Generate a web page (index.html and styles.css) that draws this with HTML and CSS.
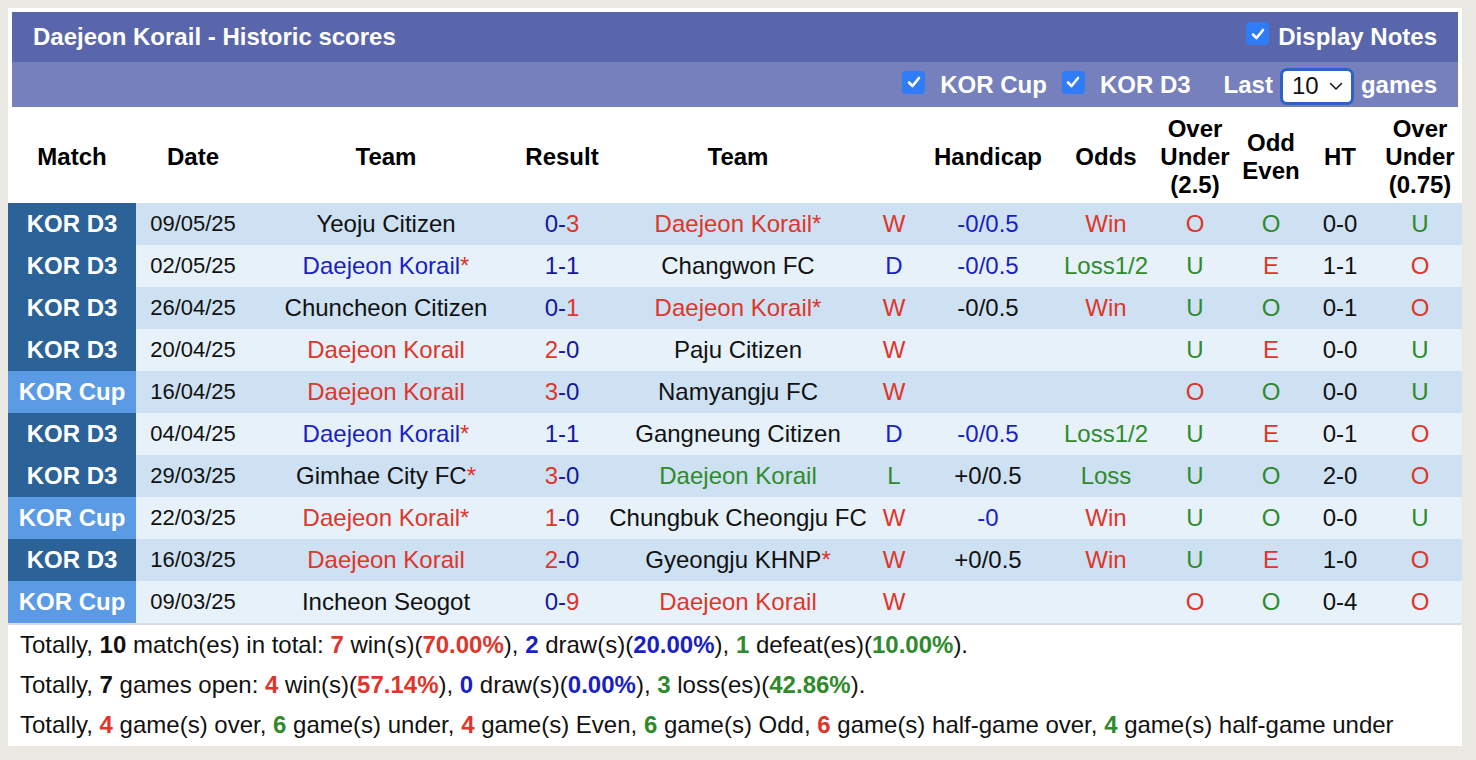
FILE: index.html
```html
<!DOCTYPE html>
<html>
<head>
<meta charset="utf-8">
<title>Daejeon Korail - Historic scores</title>
<link rel="stylesheet" href="styles.css">
</head>
<body>
<div class="panel">
  <div class="bar-title">
    <span class="title">Daejeon Korail - Historic scores</span>
    <label class="opt"><span class="cb"><svg viewBox="0 0 22 22" width="22" height="22"><path d="M6 11.5 L9.5 15 L16 7" fill="none" stroke="#fff" stroke-width="2.6" stroke-linecap="round" stroke-linejoin="round"/></svg></span><span>Display Notes</span></label>
  </div>
  <div class="bar-filter">
    <label class="opt"><span class="cb"><svg viewBox="0 0 22 22" width="22" height="22"><path d="M6 11.5 L9.5 15 L16 7" fill="none" stroke="#fff" stroke-width="2.6" stroke-linecap="round" stroke-linejoin="round"/></svg></span><span>KOR Cup</span></label>
    <label class="opt"><span class="cb"><svg viewBox="0 0 22 22" width="22" height="22"><path d="M6 11.5 L9.5 15 L16 7" fill="none" stroke="#fff" stroke-width="2.6" stroke-linecap="round" stroke-linejoin="round"/></svg></span><span>KOR D3</span></label>
    <span class="last">Last</span>
    <span class="select">10<svg viewBox="0 0 14 9" width="14" height="9"><path d="M1.5 1.5 L7 7 L12.5 1.5" fill="none" stroke="#111" stroke-width="1.5" stroke-linecap="round" stroke-linejoin="round"/></svg></span>
    <span class="games">games</span>
  </div>
  <table class="scores">
    <colgroup>
      <col class="c-match"><col class="c-date"><col class="c-team"><col class="c-res"><col class="c-team"><col class="c-wl"><col class="c-hc"><col class="c-odds"><col class="c-ou"><col class="c-oe"><col class="c-ht"><col class="c-ou2">
    </colgroup>
    <thead>
      <tr>
        <th>Match</th><th>Date</th><th>Team</th><th>Result</th><th>Team</th><th></th><th>Handicap</th><th>Odds</th><th>Over<br>Under<br>(2.5)</th><th>Odd<br>Even</th><th>HT</th><th>Over<br>Under<br>(0.75)</th>
      </tr>
    </thead>
    <tbody>
      <tr class="r1">
        <td class="lg d3">KOR D3</td><td class="dt">09/05/25</td><td>Yeoju Citizen</td><td class="sc">0-<span class="red">3</span></td><td class="red">Daejeon Korail<span class="star">*</span></td><td class="red">W</td><td class="blue">-0/0.5</td><td class="red">Win</td><td class="red">O</td><td class="green">O</td><td>0-0</td><td class="green">U</td>
      </tr>
      <tr class="r2">
        <td class="lg d3">KOR D3</td><td class="dt">02/05/25</td><td class="blue">Daejeon Korail<span class="star">*</span></td><td class="sc">1-1</td><td>Changwon FC</td><td class="blue">D</td><td class="blue">-0/0.5</td><td class="green">Loss1/2</td><td class="green">U</td><td class="red">E</td><td>1-1</td><td class="red">O</td>
      </tr>
      <tr class="r1">
        <td class="lg d3">KOR D3</td><td class="dt">26/04/25</td><td>Chuncheon Citizen</td><td class="sc">0-<span class="red">1</span></td><td class="red">Daejeon Korail<span class="star">*</span></td><td class="red">W</td><td>-0/0.5</td><td class="red">Win</td><td class="green">U</td><td class="green">O</td><td>0-1</td><td class="red">O</td>
      </tr>
      <tr class="r2">
        <td class="lg d3">KOR D3</td><td class="dt">20/04/25</td><td class="red">Daejeon Korail</td><td class="sc"><span class="red">2</span>-0</td><td>Paju Citizen</td><td class="red">W</td><td></td><td></td><td class="green">U</td><td class="red">E</td><td>0-0</td><td class="green">U</td>
      </tr>
      <tr class="r1">
        <td class="lg cup">KOR Cup</td><td class="dt">16/04/25</td><td class="red">Daejeon Korail</td><td class="sc"><span class="red">3</span>-0</td><td>Namyangju FC</td><td class="red">W</td><td></td><td></td><td class="red">O</td><td class="green">O</td><td>0-0</td><td class="green">U</td>
      </tr>
      <tr class="r2">
        <td class="lg d3">KOR D3</td><td class="dt">04/04/25</td><td class="blue">Daejeon Korail<span class="star">*</span></td><td class="sc">1-1</td><td>Gangneung Citizen</td><td class="blue">D</td><td class="blue">-0/0.5</td><td class="green">Loss1/2</td><td class="green">U</td><td class="red">E</td><td>0-1</td><td class="red">O</td>
      </tr>
      <tr class="r1">
        <td class="lg d3">KOR D3</td><td class="dt">29/03/25</td><td>Gimhae City FC<span class="star">*</span></td><td class="sc"><span class="red">3</span>-0</td><td class="green">Daejeon Korail</td><td class="green">L</td><td>+0/0.5</td><td class="green">Loss</td><td class="green">U</td><td class="green">O</td><td>2-0</td><td class="red">O</td>
      </tr>
      <tr class="r2">
        <td class="lg cup">KOR Cup</td><td class="dt">22/03/25</td><td class="red">Daejeon Korail<span class="star">*</span></td><td class="sc"><span class="red">1</span>-0</td><td>Chungbuk Cheongju FC</td><td class="red">W</td><td class="blue">-0</td><td class="red">Win</td><td class="green">U</td><td class="green">O</td><td>0-0</td><td class="green">U</td>
      </tr>
      <tr class="r1">
        <td class="lg d3">KOR D3</td><td class="dt">16/03/25</td><td class="red">Daejeon Korail</td><td class="sc"><span class="red">2</span>-0</td><td>Gyeongju KHNP<span class="star">*</span></td><td class="red">W</td><td>+0/0.5</td><td class="red">Win</td><td class="green">U</td><td class="red">E</td><td>1-0</td><td class="red">O</td>
      </tr>
      <tr class="r2">
        <td class="lg cup">KOR Cup</td><td class="dt">09/03/25</td><td>Incheon Seogot</td><td class="sc">0-<span class="red">9</span></td><td class="red">Daejeon Korail</td><td class="red">W</td><td></td><td></td><td class="red">O</td><td class="green">O</td><td>0-4</td><td class="red">O</td>
      </tr>
    </tbody>
  </table>
  <div class="summary">
    <p>Totally, <b>10</b> match(es) in total: <b class="red">7</b> win(s)(<b class="red">70.00%</b>), <b class="blue">2</b> draw(s)(<b class="blue">20.00%</b>), <b class="green">1</b> defeat(es)(<b class="green">10.00%</b>).</p>
    <p>Totally, <b>7</b> games open: <b class="red">4</b> win(s)(<b class="red">57.14%</b>), <b class="blue">0</b> draw(s)(<b class="blue">0.00%</b>), <b class="green">3</b> loss(es)(<b class="green">42.86%</b>).</p>
    <p>Totally, <b class="red">4</b> game(s) over, <b class="green">6</b> game(s) under, <b class="red">4</b> game(s) Even, <b class="green">6</b> game(s) Odd, <b class="red">6</b> game(s) half-game over, <b class="green">4</b> game(s) half-game under</p>
  </div>
</div>
</body>
</html>
```

FILE: styles.css
```css
html, body {
  margin: 0;
  padding: 0;
}
body {
  background: #e9e8e3;
  padding: 8px;
  font-family: "Liberation Sans", Arial, Helvetica, sans-serif;
  font-size: 24px;
  color: #111;
}
.panel {
  width: 1454px;
  background: #fff;
  padding-top: 4px;
}
.bar-title {
  margin: 0 4px;
  height: 50px;
  background: #5966ab;
  color: #fff;
  font-weight: bold;
  display: flex;
  align-items: center;
  justify-content: space-between;
  padding: 0 21px 0 21px;
}
.bar-filter {
  margin: 0 4px;
  height: 45px;
  background: #7580bd;
  color: #fff;
  font-weight: bold;
  display: flex;
  align-items: center;
  justify-content: flex-end;
  padding: 0 21px;
}
.opt {
  display: flex;
  align-items: center;
  gap: 15px;
}
.bar-title .opt {
  gap: 9px;
}
.bar-title .opt .cb {
  margin-top: -7px;
}
.bar-filter .opt + .opt {
  margin-left: 15px;
}
.cb {
  width: 23px;
  height: 23px;
  border-radius: 4px;
  background: #2f7df6;
  display: flex;
  align-items: center;
  justify-content: center;
  margin-top: -5px;
}
.last {
  margin-left: 33px;
}
.select {
  margin: 3px 7px 0;
  width: 74px;
  height: 37px;
  box-sizing: border-box;
  border: 3px solid #2d63c9;
  border-radius: 7px;
  background: #fff;
  color: #111;
  font-weight: normal;
  display: flex;
  align-items: center;
  justify-content: space-between;
  padding: 0 8px 0 9px;
}
.scores {
  width: 1454px;
  border-collapse: collapse;
  table-layout: fixed;
  border-bottom: 2px solid #d6dde4;
}
.c-match { width: 128px; }
.c-date { width: 114px; }
.c-team { width: 272px; }
.c-res { width: 80px; }
.c-wl { width: 40px; }
.c-hc { width: 148px; }
.c-odds { width: 88px; }
.c-ou { width: 90px; }
.c-oe { width: 62px; }
.c-ht { width: 76px; }
.c-ou2 { width: 84px; }
.scores th {
  height: 96px;
  box-sizing: border-box;
  padding: 4px 0 0;
  font-weight: bold;
  text-align: center;
  vertical-align: middle;
  line-height: 28px;
  color: #000;
}
.scores td {
  height: 42px;
  padding: 0;
  text-align: center;
  vertical-align: middle;
  white-space: nowrap;
  color: #111;
}
.scores td.dt {
  font-size: 22px;
}
.scores tr.r1 td { background: #cde1f2; }
.scores tr.r2 td { background: #e6f1fa; }
.scores tr td.lg {
  color: #fff;
  font-weight: bold;
}
.scores tr td.d3 { background: #2b6398; }
.scores tr td.cup { background: #5b9ae4; }
.scores td.sc { color: #15189a; }
.red, .scores td.red, .scores td .red { color: #e0352b; }
.blue, .scores td.blue { color: #1a1fc4; }
.green, .scores td.green { color: #2f8a2b; }
.star { color: #e0352b; }
.summary {
  padding: 0 12px 1px;
}
.summary p {
  margin: 0;
  line-height: 40px;
  color: #111;
}
.summary b.blue { color: #1a1fc4; }
```
